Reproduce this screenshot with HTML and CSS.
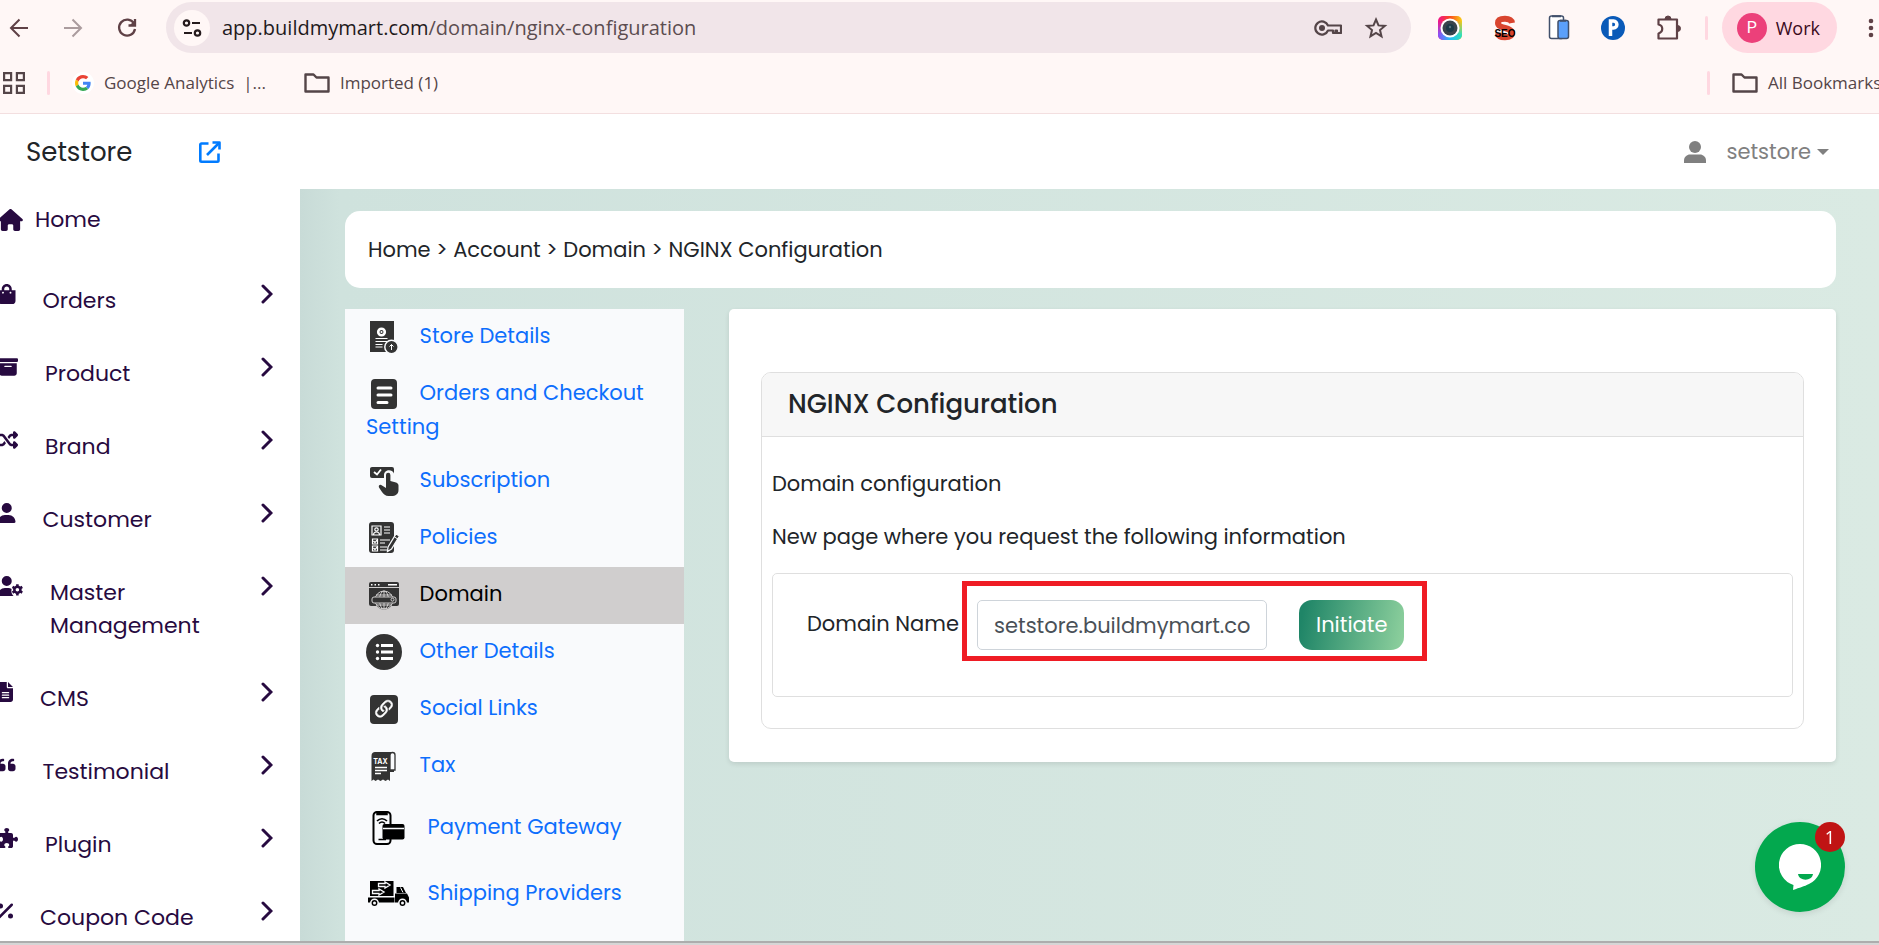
FILE: index.html
```
<!DOCTYPE html>
<html lang="en">
<head>
  <meta charset="utf-8">
  <meta name="viewport" content="width=device-width, initial-scale=1">
  <title>Setstore - NGINX Configuration</title>
  <link rel="stylesheet" href="styles.css">
</head>
<body>
  <!-- Browser bar -->
  <div class="browser">
    <div class="toolbar">
      <button class="tool-btn" aria-label="Back">
        <svg width="20" height="20" viewBox="0 0 20 20" fill="none" stroke="#5f4146" stroke-width="2"><path d="M19 10H3M10.500 1.500 2 10l8.500 8.500"/></svg>
      </button>
      <button class="tool-btn" aria-label="Forward">
        <svg width="20" height="20" viewBox="0 0 20 20" fill="none" stroke="#ab9c9e" stroke-width="2"><path d="M1 10h16M9.500 1.500 18 10l-8.500 8.500"/></svg>
      </button>
      <button class="tool-btn" aria-label="Reload">
        <svg width="20" height="20" viewBox="0 0 20 20" fill="none" stroke="#5f4146" stroke-width="2.300"><path d="M17 5.500A8 8 0 1 0 18 11"/><path d="M18 1v6.500h-6.500"/><path d="M18 2v5h-5z" fill="#5f4146" stroke="none"/></svg>
      </button>
      <div class="address-bar">
        <button class="site-info" aria-label="Site information">
          <svg width="20" height="18" viewBox="0 0 20 18" fill="none" stroke="#241a1c" stroke-width="2.200"><circle cx="4.500" cy="4" r="2.700"/><path d="M10 4h8M2 14h8"/><circle cx="15.500" cy="14" r="2.700"/></svg>
        </button>
        <input class="url-input" type="text" id="url" aria-label="Address" value="">
        <label class="url-text" for="url">app.buildmymart.com<span>/domain/nginx-configuration</span></label>
        <button class="bar-btn" aria-label="Passwords">
          <svg width="28" height="18" viewBox="0 0 28 18" fill="none" stroke="#544548" stroke-width="2.200"><path d="M14 6.500A6.600 6.600 0 1 0 14 11.500h5V14h2.500v-2.500h1.500V14h4V6.500z" stroke-linejoin="round"/><circle cx="8" cy="9" r="3" fill="#544548" stroke="none"/></svg>
        </button>
        <button class="bar-btn" aria-label="Bookmark this page">
          <svg width="24" height="24" viewBox="0 0 24 24" fill="none" stroke="#544548" stroke-width="2"><path d="m12 3.500 2.500 5.900 6.400.500-4.900 4.200 1.500 6.300-5.500-3.400-5.500 3.400L8 14.100 3.100 9.900l6.400-.500z"/></svg>
        </button>
      </div>
      <div class="extensions">
        <svg width="24" height="24" viewBox="0 0 24 24">
          <defs>
            <linearGradient id="camTop" x1="0" x2="1" y1="0" y2="0"><stop offset="0" stop-color="#f0128c"/><stop offset=".5" stop-color="#fa4a1e"/><stop offset="1" stop-color="#f9d016"/></linearGradient>
            <linearGradient id="camBottom" x1="0" x2="1" y1="0" y2="0"><stop offset="0" stop-color="#8b4dfb"/><stop offset=".5" stop-color="#26bdf5"/><stop offset="1" stop-color="#2ee2b8"/></linearGradient>
            <linearGradient id="camFade" x1="0" x2="0" y1="0" y2="1"><stop offset=".2" stop-color="#000"/><stop offset=".8" stop-color="#fff"/></linearGradient>
            <mask id="camMask"><rect width="24" height="24" fill="url(#camFade)"/></mask>
          </defs>
          <rect width="24" height="24" rx="5" fill="url(#camTop)"/>
          <rect width="24" height="24" rx="5" fill="url(#camBottom)" mask="url(#camMask)"/>
          <circle cx="12" cy="12" r="9.500" fill="#fff"/>
          <circle cx="12" cy="12" r="7.500" fill="#39434c"/>
          <circle cx="12" cy="12" r="4" fill="#1c3947"/>
          <circle cx="12" cy="11" r="1.200" fill="#59737d"/>
        </svg>
        <svg width="24" height="26" viewBox="0 0 24 26">
          <path d="M19 8C18.500 5 16 3.800 12 3.800S5 5 5 8c0 6 14 4 14 10 0 3.500-3.500 4.300-7 4.300S5.500 21.500 5 18" fill="none" stroke="#d9452f" stroke-width="6"/>
          <text class="seo-text" x="12" y="22" text-anchor="middle">SEO</text>
        </svg>
        <svg width="22" height="25" viewBox="0 0 22 25" stroke="#41506b" stroke-width="1.500">
          <rect x="1.500" y="1" width="14" height="22.500" rx="2" fill="#fff"/>
          <rect x="10" y="5.500" width="10.500" height="18" rx="2" fill="#5ba0fb"/>
          <path d="M4 1.200h9M12 5.700h6" stroke-width="2"/>
        </svg>
        <svg width="24" height="24" viewBox="0 0 24 24">
          <circle cx="12" cy="12" r="12" fill="#0a5ab8"/>
          <path d="M9.500 20V5h3c4.500 0 4.500 7 0 7h-2" fill="none" stroke="#fff" stroke-width="3.500"/>
        </svg>
        <svg width="26" height="26" viewBox="0 0 26 26" fill="none" stroke="#5f4146" stroke-width="2.200" stroke-linejoin="round">
          <path d="M2.500 4.500h18.500v19H2.500v-5c5-1.500 5-8 0-9z"/>
          <path d="M9 4a3 3 0 0 1 6 0zM21.500 10.500a3 3 0 0 1 0 6z" fill="#5f4146" stroke-width="1"/>
        </svg>
      </div>
      <span class="divider"></span>
      <button class="profile"><span class="avatar">P</span>Work</button>
      <button class="more" aria-label="More">
        <svg width="6" height="20" viewBox="0 0 6 20" fill="#5f4146"><circle cx="3" cy="3" r="2.300"/><circle cx="3" cy="10" r="2.300"/><circle cx="3" cy="17" r="2.300"/></svg>
      </button>
    </div>
    <div class="bookmarks">
      <svg width="22" height="22" viewBox="0 0 22 22" fill="none" stroke="#544548" stroke-width="2.200"><path d="M1.100 1.100h7v7h-7zM13.900 1.100h7v7h-7zM1.100 13.900h7v7h-7zM13.900 13.900h7v7h-7z"/></svg>
      <span class="divider"></span>
      <a href="#" class="bookmark">
        <span class="favicon">
          <svg width="16" height="16" viewBox="0 0 48 48"><path fill="#EA4335" d="M24 9.500c3.540 0 6.710 1.220 9.210 3.600l6.850-6.850C35.900 2.380 30.470 0 24 0 14.620 0 6.510 5.380 2.560 13.220l7.980 6.190C12.430 13.720 17.740 9.500 24 9.500z"/><path fill="#4285F4" d="M46.980 24.550c0-1.570-.15-3.090-.38-4.550H24v9.020h12.940c-.58 2.960-2.260 5.480-4.780 7.180l7.730 6c4.510-4.180 7.090-10.360 7.090-17.650z"/><path fill="#FBBC05" d="M10.530 28.590c-.48-1.450-.76-2.990-.76-4.590s.27-3.140.76-4.590l-7.980-6.190C.92 16.460 0 20.120 0 24c0 3.880.92 7.540 2.560 10.780l7.970-6.190z"/><path fill="#34A853" d="M24 48c6.480 0 11.930-2.130 15.890-5.810l-7.730-6c-2.150 1.450-4.920 2.300-8.160 2.300-6.260 0-11.570-4.220-13.470-9.910l-7.980 6.190C6.510 42.620 14.620 48 24 48z"/></svg>
        </span>
        Google Analytics&nbsp; |...
      </a>
      <a href="#" class="bookmark folder">
        <svg width="26" height="20" viewBox="0 0 26 20" fill="none" stroke="#544548" stroke-width="2.400" stroke-linejoin="round"><path d="M1.500 18.500v-17h8l3 3h12v14z"/></svg>
        Imported (1)
      </a>
      <span class="divider all-divider"></span>
      <a href="#" class="bookmark all-bookmarks">
        <svg width="26" height="20" viewBox="0 0 26 20" fill="none" stroke="#544548" stroke-width="2.400" stroke-linejoin="round"><path d="M1.500 18.500v-17h8l3 3h12v14z"/></svg>
        All Bookmarks
      </a>
    </div>
  </div>

  <!-- Store header -->
  <header class="header">
    <h1 class="brand">Setstore</h1>
    <a href="#" class="visit" aria-label="Open store">
      <svg width="22" height="22" viewBox="0 0 22 22" fill="none" stroke="#007bff" stroke-width="2.600" stroke-linejoin="round"><path d="M9.500 2.500h-7a1.200 1.200 0 0 0-1.200 1.200v15.800a1.200 1.200 0 0 0 1.200 1.200h15.800a1.200 1.200 0 0 0 1.200-1.200v-7M8 14 20 2"/><path d="M13.500 1.500h7v7"/></svg>
    </a>
    <button class="user-menu">
      <svg width="22" height="22" viewBox="0 0 22 22" fill="#808080"><circle cx="11" cy="6" r="6"/><path d="M0 22v-2.500C0 16 3 13.500 6 13.500h10c3 0 6 2.500 6 6V22z"/></svg>
      setstore
      <span class="caret"></span>
    </button>
  </header>

  <div class="page">
    <nav class="sidebar">
      <a href="#" class="nav-home">
        <svg width="25" height="22" viewBox="0 0 576 512"><path d="M575.800 255.500c0 18-15 32.100-32 32.100h-32l.7 160.200c0 2.700-.2 5.400-.5 8.100V472c0 22.100-17.900 40-40 40H392c-22.100 0-40-17.900-40-40v-88c0-17.700-14.300-32-32-32h-64c-17.700 0-32 14.300-32 32v88c0 22.100-17.900 40-40 40h-80c-22.100 0-40-17.900-40-40V287.600H32c-18 0-32-14-32-32.100 0-9 3-17 10-24L266.400 8c7-7 15-8 22-8s15 2 21 7l255.400 224.500c8 7 12 15 11 24z"/></svg>
        Home
      </a>
      <a href="#" class="nav-item">
        <svg height="20" viewBox="0 0 448 512"><path d="M352 160v-32C352 57.420 294.579 0 224 0 153.420 0 96 57.420 96 128v32H0v272c0 44.183 35.817 80 80 80h288c44.183 0 80-35.817 80-80V160h-96zm-192-32c0-35.290 28.710-64 64-64s64 28.710 64 64v32H160v-32zm160 120c-13.255 0-24-10.745-24-24s10.745-24 24-24 24 10.745 24 24-10.745 24-24 24zm-192 0c-13.255 0-24-10.745-24-24s10.745-24 24-24 24 10.745 24 24-10.745 24-24 24z"/></svg>
        <span class="nav-label">Orders</span>
        <svg class="chevron" width="12" height="20" viewBox="0 0 12 20"><path d="m2 2 8 8-8 8"/></svg>
      </a>
      <a href="#" class="nav-item">
        <svg height="20" viewBox="0 0 512 512"><path d="M32 32H480c17.700 0 32 14.300 32 32V96c0 17.700-14.300 32-32 32H32C14.300 128 0 113.700 0 96V64C0 46.300 14.300 32 32 32zm0 128H480V416c0 35.300-28.700 64-64 64H96c-35.300 0-64-28.700-64-64V160zm128 80c0 8.800 7.200 16 16 16H336c8.800 0 16-7.200 16-16s-7.200-16-16-16H176c-8.800 0-16 7.200-16 16z"/></svg>
        <span class="nav-label">Product</span>
        <svg class="chevron" width="12" height="20" viewBox="0 0 12 20"><path d="m2 2 8 8-8 8"/></svg>
      </a>
      <a href="#" class="nav-item">
        <svg height="20" viewBox="0 0 512 512"><path d="M403.800 34.400c12-5 25.700-2.200 34.900 6.900l64 64c6 6 9.400 14.100 9.400 22.600s-3.400 16.600-9.400 22.600l-64 64c-9.200 9.200-22.900 11.900-34.900 6.900s-19.800-16.600-19.800-29.600V160H352c-10.100 0-19.600 4.700-25.600 12.800L284 229.300 244 176l31.200-41.600C293.300 110.200 321.800 96 352 96h32V64c0-12.900 7.800-24.600 19.800-29.600zM164 282.700L204 336l-31.200 41.600C154.700 401.800 126.200 416 96 416H32c-17.700 0-32-14.300-32-32s14.300-32 32-32H96c10.100 0 19.600-4.700 25.600-12.800L164 282.700zm274.600 188c-9.200 9.200-22.900 11.900-34.900 6.900s-19.800-16.600-19.800-29.600V416H352c-30.200 0-58.700-14.200-76.800-38.400L121.600 172.800c-6-8.100-15.500-12.800-25.600-12.800H32c-17.700 0-32-14.300-32-32s14.300-32 32-32H96c30.200 0 58.700 14.200 76.800 38.400L326.400 339.200c6 8.100 15.500 12.800 25.600 12.800h32V320c0-12.900 7.800-24.600 19.800-29.600s25.700-2.200 34.900 6.900l64 64c6 6 9.400 14.100 9.400 22.600s-3.400 16.600-9.400 22.600l-64 64z"/></svg>
        <span class="nav-label">Brand</span>
        <svg class="chevron" width="12" height="20" viewBox="0 0 12 20"><path d="m2 2 8 8-8 8"/></svg>
      </a>
      <a href="#" class="nav-item">
        <svg height="20" viewBox="0 0 448 512"><path d="M224 256A128 128 0 1 0 224 0a128 128 0 1 0 0 256zm-45.700 48C79.800 304 0 383.800 0 482.300C0 498.700 13.300 512 29.700 512H418.300c16.400 0 29.700-13.300 29.700-29.700C448 383.800 368.200 304 269.700 304H178.300z"/></svg>
        <span class="nav-label">Customer</span>
        <svg class="chevron" width="12" height="20" viewBox="0 0 12 20"><path d="m2 2 8 8-8 8"/></svg>
      </a>
      <a href="#" class="nav-item">
        <svg height="20" viewBox="0 0 640 512"><path d="M224 256A128 128 0 1 0 224 0a128 128 0 1 0 0 256zm-45.700 48C79.800 304 0 383.800 0 482.300C0 498.700 13.300 512 29.700 512H400c-50-45-70-110-50-180-25-20-55-28-80-28z"/><circle cx="496" cy="352" r="78" fill="none" stroke="#270a40" stroke-width="64"/><path d="M496 208v60M496 436v60M371 280l52 30M569 394l52 30M371 424l52-30M569 310l52-30" stroke="#270a40" stroke-width="66"/></svg>
        <span class="nav-label">Master Management</span>
        <svg class="chevron" width="12" height="20" viewBox="0 0 12 20"><path d="m2 2 8 8-8 8"/></svg>
      </a>
      <a href="#" class="nav-item">
        <svg height="20" viewBox="0 0 384 512"><path d="M64 0C28.700 0 0 28.700 0 64V448c0 35.300 28.700 64 64 64H320c35.300 0 64-28.700 64-64V160H256c-17.700 0-32-14.300-32-32V0H64zM256 0V128H384L256 0zM112 256H272c8.800 0 16 7.200 16 16s-7.200 16-16 16H112c-8.800 0-16-7.200-16-16s7.200-16 16-16zm0 64H272c8.800 0 16 7.200 16 16s-7.200 16-16 16H112c-8.800 0-16-7.200-16-16s7.200-16 16-16zm0 64H272c8.800 0 16 7.200 16 16s-7.200 16-16 16H112c-8.800 0-16-7.200-16-16s7.200-16 16-16z"/></svg>
        <span class="nav-label">CMS</span>
        <svg class="chevron" width="12" height="20" viewBox="0 0 12 20"><path d="m2 2 8 8-8 8"/></svg>
      </a>
      <a href="#" class="nav-item">
        <svg height="20" viewBox="0 0 448 512"><path d="M0 216C0 149.700 53.700 96 120 96h8c17.700 0 32 14.300 32 32s-14.300 32-32 32h-8c-30.900 0-56 25.100-56 56v8h64c35.300 0 64 28.700 64 64v64c0 35.300-28.700 64-64 64H64c-35.300 0-64-28.700-64-64V216zm256 0c0-66.300 53.700-120 120-120h8c17.700 0 32 14.300 32 32s-14.300 32-32 32h-8c-30.900 0-56 25.100-56 56v8h64c35.300 0 64 28.700 64 64v64c0 35.300-28.700 64-64 64H320c-35.300 0-64-28.700-64-64V216z"/></svg>
        <span class="nav-label">Testimonial</span>
        <svg class="chevron" width="12" height="20" viewBox="0 0 12 20"><path d="m2 2 8 8-8 8"/></svg>
      </a>
      <a href="#" class="nav-item">
        <svg height="20" viewBox="0 0 512 512"><path d="M192 104.800c0-9.200-5.800-17.300-13.200-22.800C167.200 73.300 160 61.300 160 48c0-26.500 28.700-48 64-48s64 21.500 64 48c0 13.300-7.200 25.300-18.800 34c-7.400 5.500-13.200 13.600-13.200 22.800c0 12.800 10.400 23.200 23.200 23.200H336c26.500 0 48 21.500 48 48v56.800c0 12.800 10.400 23.200 23.200 23.200c9.200 0 17.300-5.800 22.800-13.200c8.700-11.600 20.700-18.800 34-18.800c26.500 0 48 28.700 48 64s-21.500 64-48 64c-13.300 0-25.300-7.200-34-18.800c-5.500-7.400-13.600-13.200-22.800-13.200c-12.800 0-23.200 10.400-23.200 23.200V464c0 26.500-21.500 48-48 48H279.200c-12.800 0-23.200-10.400-23.200-23.200c0-9.200 5.800-17.300 13.200-22.800c11.600-8.700 18.800-20.700 18.800-34c0-26.500-28.700-48-64-48s-64 21.500-64 48c0 13.300 7.200 25.300 18.800 34c7.400 5.500 13.200 13.600 13.200 22.800c0 12.800-10.400 23.200-23.200 23.200H48c-26.500 0-48-21.500-48-48V343.200C0 330.400 10.400 320 23.200 320c9.200 0 17.300 5.800 22.800 13.200C54.700 344.800 66.700 352 80 352c26.500 0 48-28.700 48-64s-21.500-64-48-64c-13.300 0-25.300 7.200-34 18.800C40.500 250.200 32.400 256 23.200 256C10.400 256 0 245.600 0 232.800V176c0-26.500 21.500-48 48-48H168.800c12.800 0 23.200-10.400 23.200-23.200z"/></svg>
        <span class="nav-label">Plugin</span>
        <svg class="chevron" width="12" height="20" viewBox="0 0 12 20"><path d="m2 2 8 8-8 8"/></svg>
      </a>
      <a href="#" class="nav-item">
        <svg height="20" viewBox="0 0 384 512"><path d="M32 416 352 96" stroke="#270a40" stroke-width="64" stroke-linecap="round"/><circle cx="64" cy="128" r="64"/><circle cx="320" cy="384" r="64"/></svg>
        <span class="nav-label">Coupon Code</span>
        <svg class="chevron" width="12" height="20" viewBox="0 0 12 20"><path d="m2 2 8 8-8 8"/></svg>
      </a>
    </nav>

    <main class="content">
      <div class="breadcrumb">Home &gt; Account &gt; Domain &gt; NGINX Configuration</div>

      <div class="columns">
        <nav class="submenu">
          <a href="#">
            <svg width="36" height="36" viewBox="0 0 36 36"><path fill="#333" d="M4 2h24v31H4z"/><circle cx="15.500" cy="13" r="3.300" fill="none" stroke="#fff" stroke-width="2.600"/><circle cx="15.500" cy="13" r="1" fill="#fff"/><path d="M9.500 19.500h12M9.500 22.500h12M9.500 25.500h7M9.500 28h7" stroke="#fff" stroke-width="1.200"/><circle cx="25.500" cy="28" r="6.700" fill="#333" stroke="#f9fafc" stroke-width="1.500"/><path d="M25.500 31v-5.500M23.500 27.500l2-2 2 2" fill="none" stroke="#fff"/></svg>
            Store Details
          </a>
          <a href="#">
            <svg width="36" height="36" viewBox="0 0 36 36"><rect x="5" y="3" width="26" height="30" rx="4" fill="#333"/><path d="M12 12h13M12 19h13M12 26.500h9" stroke="#fff" stroke-width="3" stroke-linecap="round"/></svg>
            Orders and Checkout Setting
          </a>
          <a href="#">
            <svg width="36" height="36" viewBox="0 0 36 36" fill="#333"><path d="M6 4h20a2 2 0 0 1 2 2v4.500c-2-5-10-4-10 1.500v3H6a2 2 0 0 1-2-2V6c0-1.100.900-2 2-2z"/><path d="m8 9 3 2.500 4-5" fill="none" stroke="#fff" stroke-width="1.800"/><path d="M20 25V12a2.200 2.200 0 0 1 4.400 0v6l5.600 1.500c1.500.500 2.500 1.500 2.500 3V27c0 4-3 6-7 6h-3c-3 0-5-2-6.500-4l-3-4.500c-1-2.500 1.500-3.500 3-2z"/></svg>
            Subscription
          </a>
          <a href="#">
            <svg width="36" height="36" viewBox="0 0 36 36"><rect x="3" y="2" width="25" height="31" rx="3" fill="#333"/><g fill="none" stroke="#fff" stroke-width="1.200"><path d="M6 6h9v9H6zM6.500 19h5v5h-5zM6.500 26h5v5h-5zM7.500 21l1.500 1.500 2-2.500M7.500 28l1.500 1.500 2-2.500M18 7h6M18 10h6M18 13h6M14 20h10M14 23h5M14 27h7M14 30h7"/><circle cx="10.500" cy="9.500" r="1.700"/><path d="M7.500 15c0-4 6-4 6 0"/></g><path d="m22 27 8-13 3.500 2-8 13-4 2.500z" fill="#333" stroke="#f9fafc" stroke-width="1.300"/><path d="m28.500 17 3.300 2" stroke="#fff"/></svg>
            Policies
          </a>
          <a href="#" class="active">
            <svg width="36" height="36" viewBox="0 0 36 36"><rect x="3" y="5" width="30" height="24" rx="2" fill="#333"/><path d="M3 10.500h30" stroke="#d0cece"/><path d="M5 7.700h1.500M8.500 7.700H10M12 7.700h1.500M22 7.700h9" stroke="#fff" stroke-width="1.500"/><circle cx="18" cy="23" r="9.500" fill="#333"/><g fill="none" stroke="#d0cece"><circle cx="18" cy="23" r="9"/><ellipse cx="18" cy="23" rx="4.500" ry="9"/><path d="M18 14v18M10 18h16M10 28h16"/></g><rect x="6" y="20" width="24" height="6" rx="2" fill="#333" stroke="#d0cece"/><circle cx="26.500" cy="22.700" r="1.500" fill="none" stroke="#d0cece"/></svg>
            Domain
          </a>
          <a href="#">
            <svg width="36" height="36" viewBox="0 0 36 36"><circle cx="18" cy="18" r="18" fill="#333"/><path d="M15 11.500h12M15 18h12M15 24.500h12" stroke="#fff" stroke-width="3"/><g fill="#fff"><circle cx="11.500" cy="11.500" r="1.700"/><circle cx="11.500" cy="18" r="1.700"/><circle cx="11.500" cy="24.500" r="1.700"/></g></svg>
            Other Details
          </a>
          <a href="#">
            <svg width="36" height="36" viewBox="0 0 36 36"><rect x="4" y="4" width="28" height="29" rx="4" fill="#333"/><g transform="translate(5.600 6.100) scale(1.550)" fill="#fff" stroke="#fff" stroke-width=".4"><path d="M4.715 6.542 3.343 7.914a3 3 0 1 0 4.243 4.243l1.828-1.829A3 3 0 0 0 8.586 5.500L8 6.086a1 1 0 0 0-.154.199 2 2 0 0 1 .861 3.337L6.880 11.450a2 2 0 1 1-2.830-2.830l.793-.792a4 4 0 0 1-.128-1.287z"/><path d="M6.586 4.672A3 3 0 0 0 7.414 9.500l.775-.776a2 2 0 0 1-.896-3.346L9.120 3.550a2 2 0 1 1 2.830 2.830l-.793.792c.112.420.155.855.128 1.287l1.372-1.372a3 3 0 1 0-4.243-4.243z"/></g></svg>
            Social Links
          </a>
          <a href="#">
            <svg width="36" height="36" viewBox="0 0 36 36"><path fill="#333" d="M9 4h19v20h-4v9l-2-1.500-2.500 1.500-2.500-1.500-2.500 1.500-2.500-1.500-2.500 1.500-2-1.500-2 1.500V8c0-3 1.500-4 3.500-4z"/><path d="M24 22V7a2.500 2.500 0 0 1 5 0v15z" fill="#f9fafc" stroke="#333" stroke-width="1.300"/><path d="M9 19.500h12M9 22.500h12M9 25.500h6" stroke="#fff" stroke-width="1.300"/><text class="tax-text" x="14.500" y="16" text-anchor="middle">TAX</text></svg>
            Tax
          </a>
          <a href="#" class="wide">
            <svg width="44" height="36" viewBox="0 0 44 36"><rect x="7.500" y="2" width="17" height="32" rx="3.500" fill="#f9fafc" stroke="#000" stroke-width="2"/><path d="M11 2h10v2.500H11zM12.500 29.500H20" stroke="#000" stroke-width="1.500"/><path d="M11 11c3-3 7-3 10 0M13 13.500c2-2 4-2 6 0" fill="none" stroke="#000" stroke-width="1.700"/><rect x="16.500" y="14" width="22" height="15.500" rx="2" fill="#000"/><path d="M17 18.500h21" stroke="#f9fafc" stroke-width="1.500"/></svg>
            Payment Gateway
          </a>
          <a href="#" class="wide">
            <svg width="44" height="36" viewBox="0 0 44 36"><path d="M4 5h23.500v15H4zM2 21.500h26.500v5H2zM30.500 11H37l3 6h-9.500zM29 17.500h12l2 4v5H29z"/><path d="M12.500 7.500H19V6l5 3-5 3v-1.500h-6.500zM6.500 14.500H13V13l5 3-5 3v-1.500H6.500z" fill="none" stroke="#f9fafc" stroke-width="1.300"/><path d="M34.500 11.500 37 16.500" stroke="#f9fafc"/><circle cx="8.500" cy="27" r="3.700" stroke="#f9fafc" stroke-width="1.500"/><circle cx="36.500" cy="27" r="3.700" stroke="#f9fafc" stroke-width="1.500"/><circle cx="8.500" cy="27" r="1.500" fill="#f9fafc"/><circle cx="36.500" cy="27" r="1.500" fill="#f9fafc"/></svg>
            Shipping Providers
          </a>
        </nav>

        <section class="panel">
          <div class="card">
            <h2 class="card-header">NGINX Configuration</h2>
            <div class="card-body">
              <p>Domain configuration</p>
              <p>New page where you request the following information</p>
              <form class="domain-form">
                <label for="domainName">Domain Name</label>
                <div class="highlight">
                  <input type="text" id="domainName" value="setstore.buildmymart.com">
                  <button type="button" class="btn-initiate">Initiate</button>
                </div>
              </form>
            </div>
          </div>
        </section>
      </div>
    </main>
  </div>

  <button class="chat" aria-label="Chat">
    <svg width="42" height="46" viewBox="0 0 42 46"><path fill="#fff" d="M21 0a21 21 0 0 1 9 40c-5 2.500-9 3.500-16 6l.5-5A21 21 0 0 1 21 0z"/><path fill="#03a84e" d="M19 30h15c-1 7.500-14 7.500-15 0z"/></svg>
    <span class="chat-badge">1</span>
  </button>
</body>
</html>
```
FILE: styles.css
```
* {
  box-sizing: border-box;
}

body {
  display: flex;
  flex-direction: column;
  height: 100vh;
  margin: 0;
  overflow: hidden;
  font-family: Poppins, Inter, 'Open Sans', sans-serif;
  font-size: 21px;
  line-height: 34px;
  color: #212529;
  background: #fff;
}

a {
  color: inherit;
  text-decoration: none;
}

button {
  padding: 0;
  border: none;
  background: none;
  font: inherit;
  color: inherit;
  cursor: pointer;
}

svg {
  flex: none;
}

/* Browser bar */
.browser {
  flex: none;
  background: #fff7f6;
  border-bottom: 1px solid #f3dfe0;
  font-family: 'Segoe UI', 'Open Sans', sans-serif;
  font-size: 17px;
  line-height: 24px;
  color: #544548;
}

.toolbar {
  display: flex;
  align-items: center;
  height: 54px;
  padding-top: 1px;
  padding-left: 9px;
}

.tool-btn {
  display: flex;
  width: 20px;
  margin-right: 34px;
}

.address-bar {
  display: flex;
  flex: 1;
  align-items: center;
  height: 51px;
  margin-left: -5px;
  padding: 0 23px 0 8px;
  border-radius: 26px;
  background: #f1e5e9;
}

.site-info {
  display: flex;
  align-items: center;
  justify-content: center;
  width: 36px;
  height: 36px;
  border-radius: 50%;
  background: #fff7f6;
}

.url-input {
  width: 0;
  padding: 0;
  border: none;
  background: none;
}

.url-text {
  flex: 1;
  margin-left: 12px;
  font-size: 20px;
  color: #1f1a1c;
}

.url-text span {
  color: #5c4d50;
}

.bar-btn {
  display: flex;
  margin-left: 22px;
}

.extensions {
  display: flex;
  align-items: center;
  gap: 31px;
  margin: 0 23px 0 27px;
}

.seo-text {
  font: bold 10px 'Liberation Sans', sans-serif;
}

.divider {
  width: 3px;
  height: 24px;
  border-radius: 2px;
  background: #ffd8e1;
}

.profile {
  display: flex;
  align-items: center;
  height: 51px;
  margin: 0 31px 0 14px;
  padding: 0 17px 0 15px;
  border-radius: 26px;
  background: #ffd8e1;
  color: #3a0b1c;
  font-size: 18px;
}

.avatar {
  width: 30px;
  height: 30px;
  margin-right: 9px;
  border-radius: 50%;
  background: #ec407a;
  color: #fff;
  font-family: Roboto, sans-serif;
  font-size: 16px;
  line-height: 30px;
}

.more {
  display: flex;
  margin-right: 5px;
}

.bookmarks {
  display: flex;
  align-items: center;
  height: 59px;
  padding: 0 0 2px 3px;
  white-space: nowrap;
}

.bookmarks .divider {
  margin: 0 22px;
}

.bookmark {
  display: flex;
  align-items: center;
  gap: 10px;
}

.favicon {
  display: flex;
  align-items: center;
  justify-content: center;
  width: 22px;
  height: 22px;
  border-radius: 50%;
  background: #fff;
}

.folder {
  margin-left: 38px;
}

.bookmarks .all-divider {
  margin-left: auto;
}

.all-bookmarks {
  width: 147px;
}

/* Store header */
.header {
  display: flex;
  flex: none;
  align-items: center;
  height: 75px;
  padding: 0 50px 0 26px;
}

.brand {
  width: 173px;
  margin: 0;
  font-size: 26px;
  font-weight: 400;
}

.visit {
  display: flex;
}

.user-menu {
  display: flex;
  align-items: center;
  margin-left: auto;
  color: #808080;
}

.user-menu svg {
  margin-right: 20px;
}

.caret {
  margin-left: 6px;
  border: 6px solid transparent;
  border-top-color: #808080;
  border-bottom: 0;
}

/* Page */
.page {
  display: flex;
  flex: 1;
  min-height: 0;
  margin-bottom: 2px;
  border-bottom: 2px solid #adadad;
  box-shadow: 0 2px #d6d6d6;
  overflow: hidden;
}

.sidebar {
  flex: none;
  width: 300px;
  font-size: 22px;
  color: #270a40;
  fill: #270a40;
}

.nav-home {
  display: flex;
  align-items: center;
  gap: 12px;
  height: 61px;
  margin-left: -2px;
  padding-top: 1px;
}

.nav-item {
  display: flex;
  align-items: flex-start;
  gap: 27px;
  margin: 0 27px 0 -2px;
  padding: 34px 0 6px;
  line-height: 33px;
}

.nav-label {
  flex: 1;
}

.chevron {
  fill: none;
  stroke: #270a40;
  stroke-width: 3;
  stroke-linecap: round;
}

.content {
  flex: 1;
  min-width: 0;
  padding: 22px 43px 0 45px;
  background: linear-gradient(90deg, #c8dbd7, #cfe2dd 40px, #daeae3);
}

.breadcrumb {
  padding: 22px 23px 21px;
  border-radius: 15px;
  background: #fff;
}

.columns {
  display: flex;
  align-items: flex-start;
  gap: 45px;
  margin-top: 21px;
}

.submenu {
  flex: none;
  width: 339px;
  height: 100vh;
  background: #f9fafc;
  color: #0d6efd;
}

.submenu a {
  display: block;
  padding: 10px 21px 11px;
  line-height: 30px;
}

.submenu svg {
  margin-right: 12px;
  vertical-align: middle;
}

.submenu .active {
  background: #d0cece;
  color: #000;
}

.submenu .wide {
  padding: 15px 21px;
}

.tax-text {
  fill: #fff;
  font: bold 7px Inter, sans-serif;
}

.panel {
  flex: 1;
  padding: 63px 32px 33px;
  border-radius: 5px;
  background: #fff;
  box-shadow: 0 2px 5px rgba(0, 0, 0, 0.1);
}

.card {
  border: 1px solid #dfdfdf;
  border-radius: 10px;
  overflow: hidden;
}

.card-header {
  margin: 0;
  padding: 14px 26px 15px;
  border-bottom: 1px solid #dfdfdf;
  background: #f7f7f7;
  font-size: 26px;
  font-weight: 500;
}

.card-body {
  padding: 30px 10px 31px;
}

.card-body p {
  margin: 0 0 19px;
}

.domain-form {
  display: flex;
  align-items: center;
  padding: 7px 0 35px 34px;
  border: 1px solid #dfdfdf;
  border-radius: 5px;
}

.domain-form label {
  width: 155px;
  padding-top: 6px;
  white-space: nowrap;
}

.highlight {
  display: flex;
  align-items: center;
  gap: 32px;
  padding: 14px 18px 6px 10px;
  border: 5px solid #ef1c24;
}

.highlight input {
  width: 290px;
  height: 50px;
  padding: 0 16px;
  border: 1px solid #ced4da;
  border-radius: 5px;
  background: #fff;
  font: inherit;
  color: #495057;
}

.btn-initiate {
  height: 50px;
  padding: 0 17px;
  border-radius: 13px;
  background: linear-gradient(100deg, #1f8567 5%, #8fd19e);
  color: #fff;
}

/* Chat bubble */
.chat {
  position: fixed;
  right: 34px;
  bottom: 33px;
  display: flex;
  align-items: center;
  justify-content: center;
  width: 90px;
  height: 90px;
  border-radius: 50%;
  background: #03a84e;
  box-shadow: 0 2px 6px rgba(0, 0, 0, 0.1);
}

.chat-badge {
  position: absolute;
  top: 0;
  right: 0;
  width: 30px;
  height: 30px;
  border-radius: 50%;
  background: #c01414;
  color: #fff;
  font-family: 'Open Sans', sans-serif;
  font-size: 18px;
  line-height: 30px;
}
```
